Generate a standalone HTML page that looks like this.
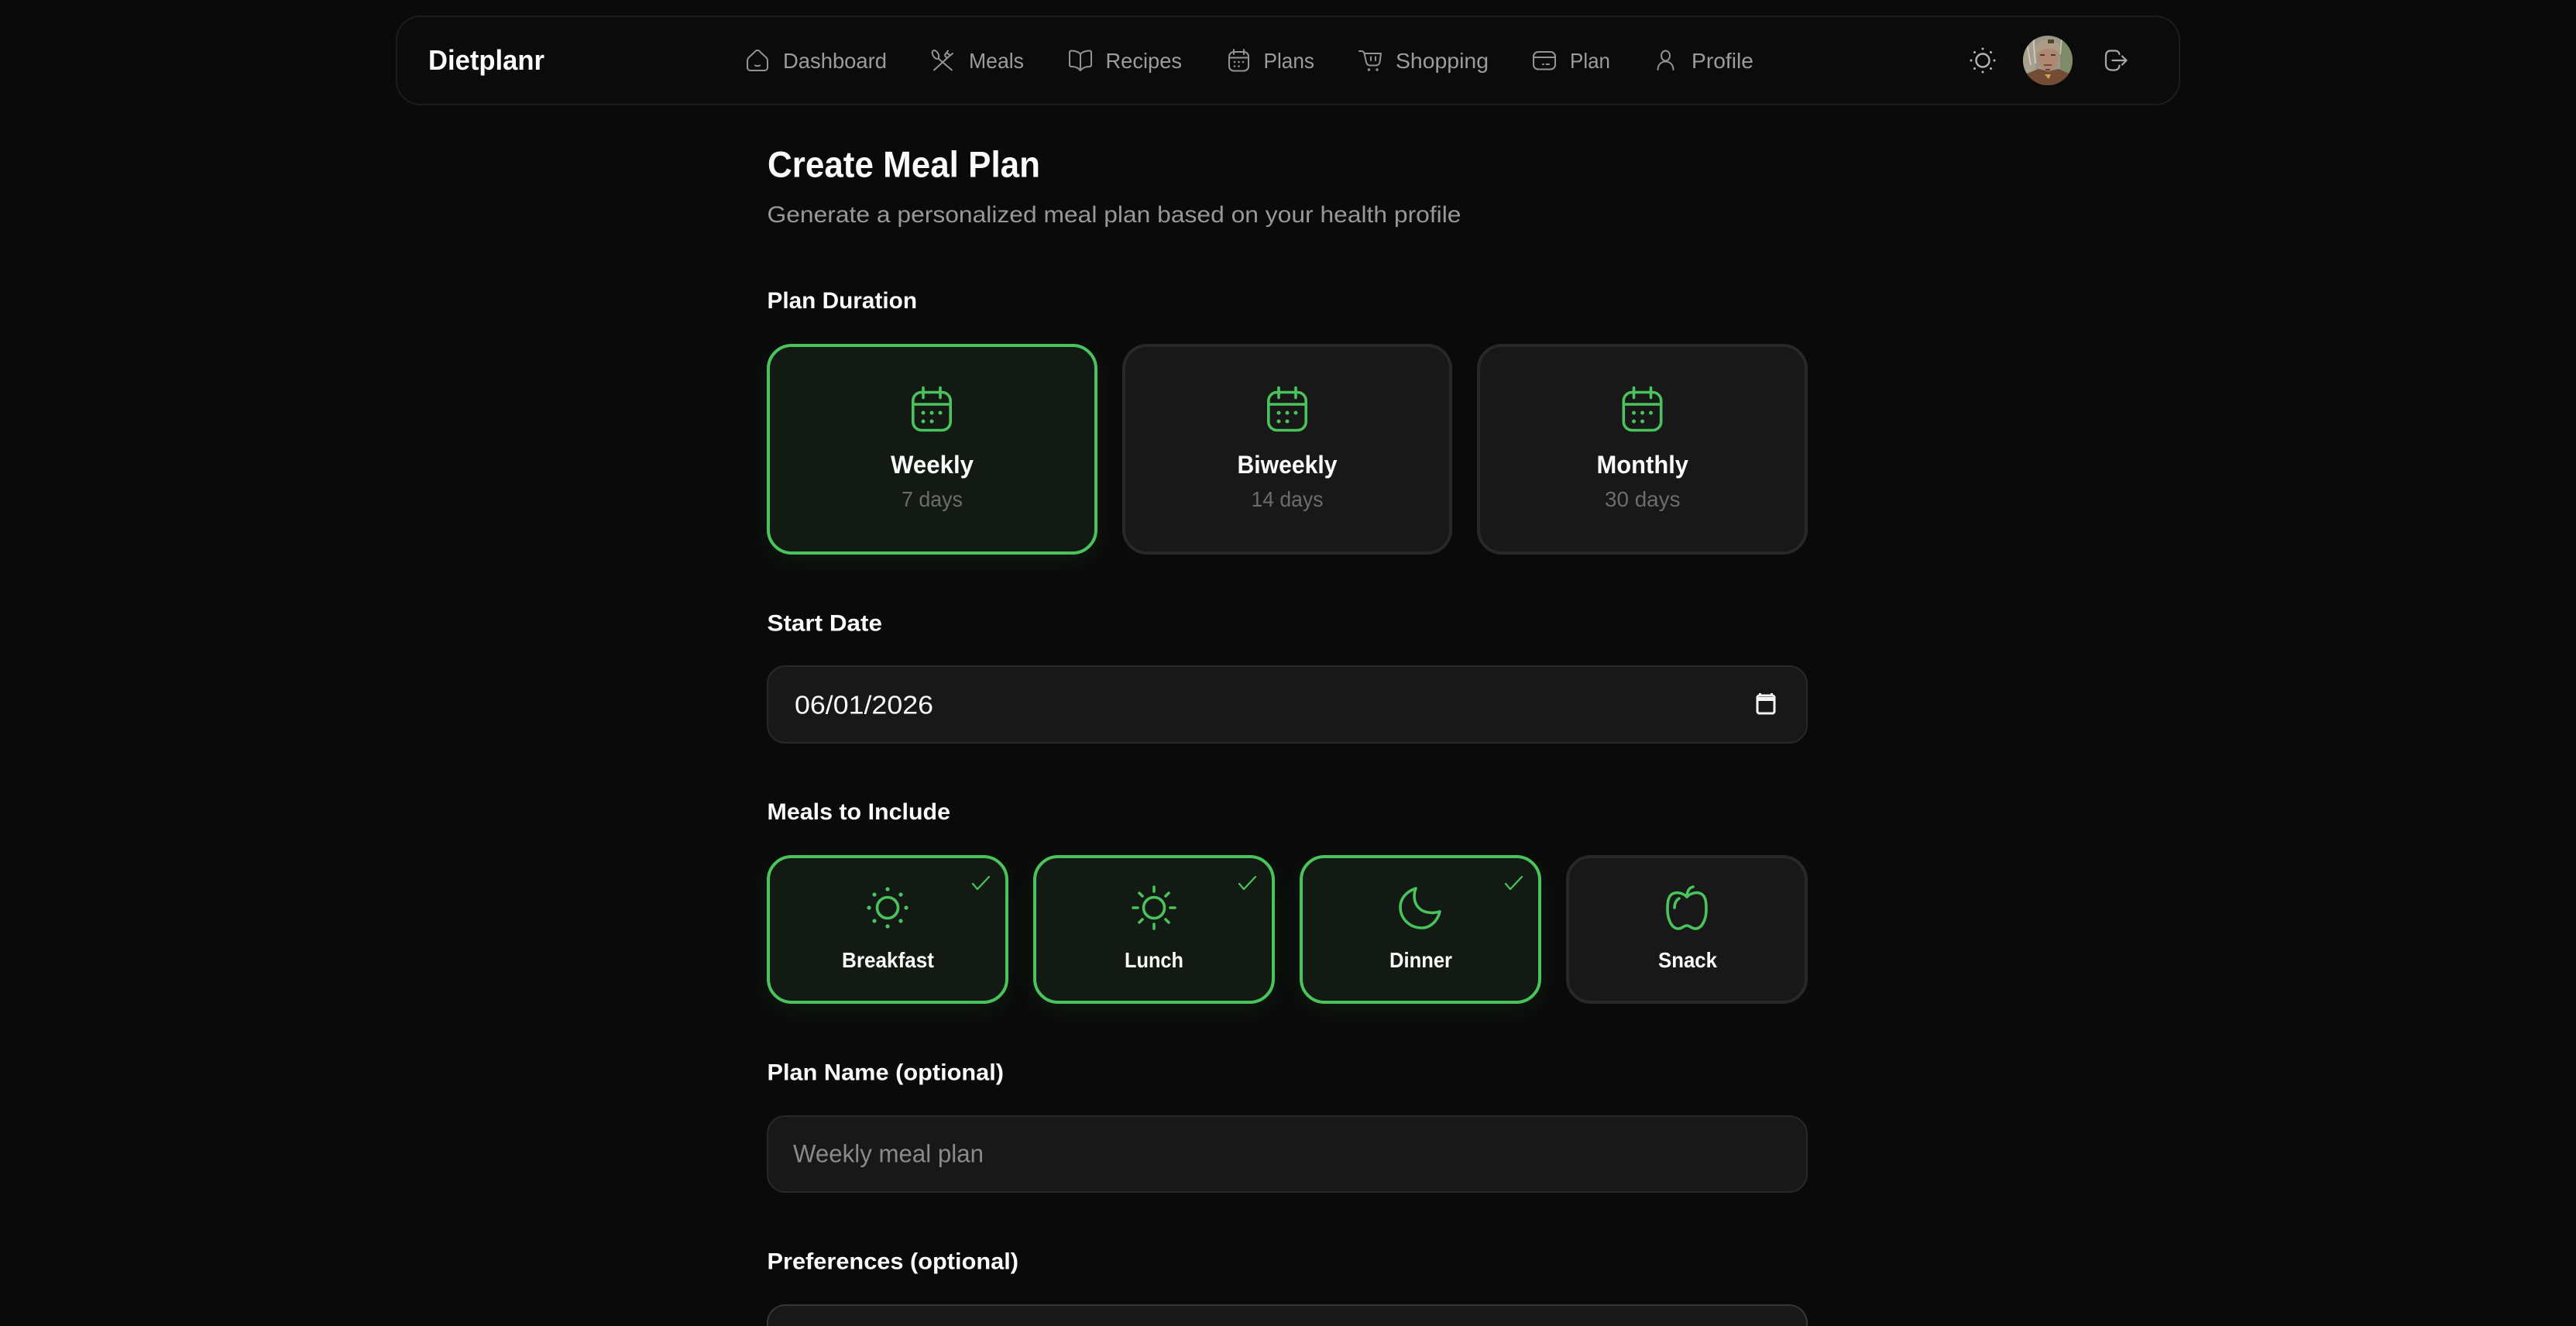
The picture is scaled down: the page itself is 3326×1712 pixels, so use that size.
<!DOCTYPE html>
<html lang="en">
<head>
<meta charset="utf-8">
<title>Dietplanr - Create Meal Plan</title>
<style>
html,body{margin:0;padding:0;background:#0a0a0a;width:3326px;height:1712px;overflow:hidden}
#p{position:relative;width:3326px;height:1712px;overflow:hidden;background:#0a0a0a}
.b{position:absolute;box-sizing:border-box}
.nav{left:511px;top:20px;width:2304px;height:116px;border:2px solid #1c1c1c;border-radius:32px;background:#0b0b0b}
.card{border:4px solid #282828;border-radius:32px;background:#181818}
.on{border-color:#4ac35d;background:#121a13;box-shadow:0 8px 32px rgba(74,195,93,.09)}
.in{left:990px;width:1344px;border:2px solid #282828;border-radius:24px;background:#181818}
svg{position:absolute;left:0;top:0;display:block}
text{font-family:"Liberation Sans",Arial,sans-serif;fill:#fafafa}
.n{font-size:28px;fill:#9c9c9c}
.l{font-size:30px;font-weight:700}
.t{font-size:32px;font-weight:700}
.s{font-size:28px;fill:#6c6c6c}
.m{font-size:28px;font-weight:700}
.ni{fill:none;stroke:#939393;stroke-width:2;stroke-linecap:round;stroke-linejoin:round}
.g{fill:none;stroke:#4ac35d;stroke-width:3.6;stroke-linecap:round;stroke-linejoin:round}
.gd{fill:#4ac35d}
</style>
</head>
<body>
<div id="p">
<div class="b nav"></div>

<div class="b card on" style="left:990px;top:444px;width:427px;height:272px"></div>
<div class="b card" style="left:1449px;top:444px;width:426px;height:272px"></div>
<div class="b card" style="left:1907px;top:444px;width:427px;height:272px"></div>

<div class="b in" style="top:859px;height:101px"></div>

<div class="b card on" style="left:990px;top:1104px;width:312px;height:192px"></div>
<div class="b card on" style="left:1334px;top:1104px;width:312px;height:192px"></div>
<div class="b card on" style="left:1678px;top:1104px;width:312px;height:192px"></div>
<div class="b card" style="left:2022px;top:1104px;width:312px;height:192px"></div>

<div class="b in" style="top:1440px;height:100px"></div>
<div class="b in" style="top:1684px;height:28px;border-color:#363636;border-bottom:0;border-radius:24px 24px 0 0"></div>

<svg width="3326" height="1712" viewBox="0 0 3326 1712" xmlns="http://www.w3.org/2000/svg">
<defs>
<clipPath id="av"><circle cx="2644" cy="78" r="32"/></clipPath>
<g id="cal">
<rect x="-24.2" y="-21" width="48.4" height="49" rx="11" class="g"/>
<path d="M-11 -27V-14M11 -27V-14M-24 -5.500H24" class="g"/>
<circle cx="-11" cy="5.500" r="2.500" class="gd"/><circle cx="0" cy="5.500" r="2.500" class="gd"/><circle cx="11" cy="5.500" r="2.500" class="gd"/>
<circle cx="-11" cy="16.500" r="2.500" class="gd"/><circle cx="0" cy="16.500" r="2.500" class="gd"/>
</g>
<path id="chk" d="M-10 9L-4 16L11 0" fill="none" stroke="#4ac35d" stroke-width="2.200" stroke-linecap="round" stroke-linejoin="round"/>
</defs>

<!-- nav -->
<text x="553" y="90" font-size="36" font-weight="700" textLength="150" lengthAdjust="spacingAndGlyphs">Dietplanr</text>

<path class="ni" d="M978 65C976 65 975 66 974 67.500L967 74C965.500 75.500 965 77 965 79V87C965 89.500 966.500 91 969 91H987C989.500 91 991 89.500 991 87V79C991 77 990.500 75.500 989 74L982 67.500C981 66 980 65 978 65Z"/>
<path class="ni" d="M975 84.500Q978 86 981 84.500"/>
<text class="n" x="1011" y="88" textLength="134" lengthAdjust="spacingAndGlyphs">Dashboard</text>

<ellipse class="ni" cx="1208" cy="70.500" rx="3.500" ry="6" transform="rotate(-30 1208 70.500)"/>
<path class="ni" d="M1212 76L1229 90.500M1224 74L1206 90.500M1220 71L1224 65.500M1224 74L1230 69M1220 71C1220.500 73.500 1222 74.500 1224 74M1222 68L1227 71.500"/>
<text class="n" x="1251" y="88" textLength="71" lengthAdjust="spacingAndGlyphs">Meals</text>

<path class="ni" d="M1395 70C1393 67 1388 65.500 1383 65.500C1381.500 65.500 1381 66.500 1381 68V84C1381 85.500 1382 86 1384 86C1388 86 1392 87.500 1395 91C1398 87.500 1402 86 1406 86C1408 86 1409 85.500 1409 84V68C1409 66.500 1408.500 65.500 1407 65.500C1402 65.500 1397 67 1395 70ZM1395 70V91"/>
<text class="n" x="1427.500" y="88" textLength="98.500" lengthAdjust="spacingAndGlyphs">Recipes</text>

<rect class="ni" x="1587" y="67" width="25" height="24.500" rx="6"/>
<path class="ni" d="M1593 64V70M1606 64V70M1587 74.500H1612"/>
<g fill="#939393"><circle cx="1594" cy="80" r="1.300"/><circle cx="1599.500" cy="80" r="1.300"/><circle cx="1605" cy="80" r="1.300"/><circle cx="1594" cy="85.500" r="1.300"/><circle cx="1599.500" cy="85.500" r="1.300"/></g>
<text class="n" x="1631.500" y="88" textLength="65.500" lengthAdjust="spacingAndGlyphs">Plans</text>

<path class="ni" d="M1755 66H1758C1760 66 1761 67 1761.500 69L1764 80C1764.500 83 1766.500 84.500 1769 84.500H1776C1779 84.500 1781 83 1781.500 80L1783 69H1761.500"/>
<path class="ni" d="M1770 73.500V78M1776 73.500V78"/>
<circle cx="1767.500" cy="90" r="1.700" fill="#939393"/><circle cx="1778" cy="90" r="1.700" fill="#939393"/>
<text class="n" x="1802" y="88" textLength="120" lengthAdjust="spacingAndGlyphs">Shopping</text>

<rect class="ni" x="1980" y="67" width="28" height="22.500" rx="6"/>
<path class="ni" d="M1980 74H2008M1992 83H1993M1996.500 83H2000"/>
<text class="n" x="2027" y="88" textLength="52" lengthAdjust="spacingAndGlyphs">Plan</text>

<ellipse class="ni" cx="2150.500" cy="72" rx="5.500" ry="6.500"/>
<path class="ni" d="M2140.500 90C2140.500 84 2144.500 79.500 2150.500 79.500C2156.500 79.500 2160.500 84 2160.500 90"/>
<text class="n" x="2184" y="88" textLength="80" lengthAdjust="spacingAndGlyphs">Profile</text>

<!-- sun -->
<circle cx="2560" cy="78" r="8.500" fill="none" stroke="#b4b4b4" stroke-width="2.400"/>
<g fill="#b4b4b4"><circle cx="2560" cy="63" r="1.500"/><circle cx="2560" cy="93" r="1.500"/><circle cx="2545" cy="78" r="1.500"/><circle cx="2575" cy="78" r="1.500"/><circle cx="2549.500" cy="67.500" r="1.500"/><circle cx="2570.500" cy="67.500" r="1.500"/><circle cx="2549.500" cy="88.500" r="1.500"/><circle cx="2570.500" cy="88.500" r="1.500"/></g>

<!-- avatar -->
<g clip-path="url(#av)">
<rect x="2612" y="46" width="64" height="64" fill="#9a9788"/>
<rect x="2612" y="46" width="16" height="50" fill="#a8a08e"/>
<rect x="2660" y="46" width="16" height="50" fill="#7f8a68"/>
<path d="M2625 46L2628 82M2617 56L2622 84" stroke="#cfccc2" stroke-width="1.800" fill="none"/>
<path d="M2662 48L2660 70" stroke="#c4c4b8" stroke-width="1.800" fill="none"/>
<path d="M2612 110V97L2632 89L2644 92L2658 89L2676 97V110H2612Z" fill="#744b35"/>
<path d="M2640 96L2648 96L2645 102Z" fill="#c9a95a"/>
<path d="M2630 64C2630 72 2631 84 2638 90C2642 93 2648 93 2652 89C2657 84 2658 72 2657 63Z" fill="#b08872"/>
<path d="M2629 72C2626 60 2630 52 2644 51C2656 50 2661 58 2660 70C2656 64 2650 62 2642 63C2636 64 2632 67 2629 72Z" fill="#ab9c84"/>
<rect x="2644" y="51" width="8" height="5" fill="#4f4639"/>
<path d="M2634 71H2640M2648 71H2654" stroke="#3e2f27" stroke-width="1.800"/>
<path d="M2639 84H2649" stroke="#644437" stroke-width="1.800"/>
<path d="M2641 90H2647" stroke="#443a30" stroke-width="1.800"/>
</g>

<!-- logout -->
<path fill="none" stroke="#a8a8a8" stroke-width="2.200" stroke-linecap="round" stroke-linejoin="round" d="M2736.500 70C2736 67 2734 65.500 2731 65.500H2725C2721 65.500 2719 68 2719 72V83C2719 87.500 2722 90.500 2727 90.500H2730C2734 90.500 2736.500 88 2736.500 84.500"/>
<path fill="none" stroke="#a8a8a8" stroke-width="2.200" stroke-linecap="round" stroke-linejoin="round" d="M2727.500 78H2745M2740 72.500L2745.500 78L2740 83.500"/>

<!-- heading -->
<text x="991" y="228.500" font-size="47" font-weight="700" textLength="352" lengthAdjust="spacingAndGlyphs">Create Meal Plan</text>
<text x="990.500" y="287" font-size="30" style="fill:#989898" textLength="896" lengthAdjust="spacingAndGlyphs">Generate a personalized meal plan based on your health profile</text>

<text class="l" x="990.500" y="398" textLength="193.500" lengthAdjust="spacingAndGlyphs">Plan Duration</text>

<use href="#cal" x="1203" y="527.500"/>
<use href="#cal" x="1662" y="527.500"/>
<use href="#cal" x="2120.500" y="527.500"/>

<text class="t" x="1150" y="611" textLength="107" lengthAdjust="spacingAndGlyphs">Weekly</text>
<text class="s" x="1164" y="654" textLength="79" lengthAdjust="spacingAndGlyphs">7 days</text>
<text class="t" x="1597.500" y="611" textLength="129" lengthAdjust="spacingAndGlyphs">Biweekly</text>
<text class="s" x="1615.500" y="654" textLength="93" lengthAdjust="spacingAndGlyphs">14 days</text>
<text class="t" x="2061.500" y="611" textLength="118.500" lengthAdjust="spacingAndGlyphs">Monthly</text>
<text class="s" x="2072" y="654" textLength="97.500" lengthAdjust="spacingAndGlyphs">30 days</text>

<!-- start date -->
<text class="l" x="990.500" y="814.500" textLength="148.500" lengthAdjust="spacingAndGlyphs">Start Date</text>
<text x="1026" y="921.500" font-size="33" textLength="179" lengthAdjust="spacingAndGlyphs">06/01/2026</text>
<rect x="2269" y="898" width="22" height="23" rx="2.500" fill="none" stroke="#f5f5f5" stroke-width="3"/>
<path d="M2268 900H2292V905H2268Z" fill="#f5f5f5"/>
<path d="M2272.500 895V899M2287.500 895V899" stroke="#f5f5f5" stroke-width="3"/>

<!-- meals -->
<text class="l" x="990.500" y="1058" textLength="236.500" lengthAdjust="spacingAndGlyphs">Meals to Include</text>

<circle cx="1146" cy="1172" r="13.500" class="g"/>
<g class="gd"><circle cx="1146" cy="1148" r="2.600"/><circle cx="1146" cy="1196" r="2.600"/><circle cx="1122" cy="1172" r="2.600"/><circle cx="1170" cy="1172" r="2.600"/><circle cx="1129" cy="1155" r="2.600"/><circle cx="1163" cy="1155" r="2.600"/><circle cx="1129" cy="1189" r="2.600"/><circle cx="1163" cy="1189" r="2.600"/></g>
<use href="#chk" x="1266" y="1132"/>
<text class="m" x="1087" y="1249" textLength="119" lengthAdjust="spacingAndGlyphs">Breakfast</text>

<circle cx="1490" cy="1172" r="13.500" class="g"/>
<path class="g" d="M1490 1145V1151M1490 1193V1199M1463 1172H1469M1511 1172H1517M1471 1153L1475 1157M1505 1187L1509 1191M1509 1153L1505 1157M1475 1187L1471 1191"/>
<use href="#chk" x="1610" y="1132"/>
<text class="m" x="1452" y="1249" textLength="76" lengthAdjust="spacingAndGlyphs">Lunch</text>

<path class="g" d="M1828 1147C1821 1165 1833 1184 1859 1177C1856 1190 1846 1198 1836 1198C1820 1198 1808 1186 1808 1171C1808 1160 1816 1151 1828 1147Z"/>
<use href="#chk" x="1954" y="1132"/>
<text class="m" x="1794" y="1249" textLength="81" lengthAdjust="spacingAndGlyphs">Dinner</text>

<path class="g" d="M2178 1158C2172 1152 2163 1151 2158 1155C2153 1159 2153 1168 2153 1175C2153 1186 2158 1199 2167 1199C2172 1199 2174 1195 2178 1195C2182 1195 2184 1199 2189 1199C2198 1199 2203 1186 2203 1175C2203 1168 2203 1159 2198 1155C2193 1151 2184 1152 2178 1158Z"/>
<path class="g" d="M2178 1158C2178 1151 2181 1146 2186 1145M2162 1172C2162 1167 2164 1162 2168 1160"/>
<text class="m" x="2141" y="1249" textLength="76" lengthAdjust="spacingAndGlyphs">Snack</text>

<!-- plan name -->
<text class="l" x="990.500" y="1394.500" textLength="305.500" lengthAdjust="spacingAndGlyphs">Plan Name (optional)</text>
<text x="1024" y="1500.500" font-size="32" style="fill:#8a8a8a" textLength="246" lengthAdjust="spacingAndGlyphs">Weekly meal plan</text>

<!-- preferences -->
<text class="l" x="990.500" y="1638.500" textLength="324.500" lengthAdjust="spacingAndGlyphs">Preferences (optional)</text>
</svg>
</div>
</body>
</html>
